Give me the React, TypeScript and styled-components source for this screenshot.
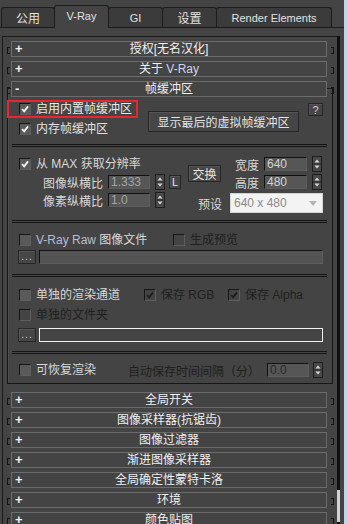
import { createGlobalStyle, styled } from 'styled-components';

const GlobalStyle = createGlobalStyle`
  html, body {
    margin: 0;
    padding: 0;
    background: #444444;
  }
  body {
    font-family: 'Liberation Sans', 'Noto Sans CJK SC', sans-serif;
    font-size: 12px;
    color: #dcdcdc;
  }
  * {
    box-sizing: border-box;
  }
`;

const LIGHT = '#d8d8d8';
const DIM = '#202020';

const Window = styled.div`
  width: 347px;
  height: 524px;
  display: flex;
  overflow: hidden;
  background: #444444;
`;

const Main = styled.div`
  width: 344px;
  display: flex;
  flex-direction: column;
`;

const EdgeStrip = styled.div`
  width: 3px;
  background: #c4d4e6;
`;

// tabs
const TabBar = styled.div`
  height: 28px;
  flex-shrink: 0;
  display: flex;
  align-items: flex-end;
  padding-left: 1px;
  border-bottom: 1px solid #1c1c1c;
`;

const Tab = styled.div<{ $w: number; $active?: boolean; $latin?: boolean }>`
  position: relative;
  width: ${p => p.$w}px;
  height: ${p => (p.$active ? 23 : 20)}px;
  margin-bottom: ${p => (p.$active ? -1 : 0)}px;
  margin-right: -1px;
  background: ${p => (p.$active ? '#444444' : '#3b3b3b')};
  border: 1px solid #1c1c1c;
  border-bottom: none;
  border-radius: 3px 3px 0 0;
  display: flex;
  align-items: center;
  justify-content: center;
  padding-bottom: ${p => (p.$active ? 2 : 0)}px;
  color: #e2e2e2;
  font-size: ${p => (p.$latin ? 11 : 12)}px;
  z-index: ${p => (p.$active ? 1 : 0)};
`;

// panel + scroll bar
const Body = styled.div`
  flex: 1;
  min-height: 0;
  display: flex;
  margin-top: 8px;
`;

const Panel = styled.div`
  width: 335px;
  margin-left: 2px;
  padding-top: 4px;
  border-left: 1px solid #1b1b1b;
  border-top: 1px solid #1b1b1b;
  overflow: hidden;
`;

const Track = styled.div`
  width: 3px;
  background: #0f0f0f;
  display: flex;
  flex-direction: column;
  justify-content: flex-end;
`;

const Thumb = styled.div`
  height: 32px;
  margin-bottom: 2px;
  background: #d2d2d2;
`;

// rollout headers
const RollRow = styled.div<{ $open?: boolean }>`
  position: relative;
  z-index: 1;
  display: flex;
  align-items: flex-end;
  height: 16px;
  margin: ${p => (p.$open ? '0' : '0 0 4px 4px')};
`;

const Bracket = styled.span<{ $side: 'l' | 'r' }>`
  width: 3px;
  height: 7px;
  margin-bottom: 3px;
  border: 1px solid #141414;
  ${p => (p.$side === 'l' ? 'border-right: none; margin-right: 1px;' : 'border-left: none; margin-left: 4px;')}
`;

const HeadBox = styled.div`
  width: 316px;
  height: 16px;
  background: #444444;
  border: 1px solid #6c6c6c;
  display: grid;
  grid-template-columns: 14px 1fr 14px;
  align-items: center;
  line-height: 14px;
  color: #f0f0f0;
`;

const Sign = styled.span`
  padding-left: 3px;
  font-weight: bold;
  font-size: 13px;
`;

const HeadTitle = styled.span`
  text-align: center;
  white-space: nowrap;
`;

const Latin = styled.span<{ $c?: string }>`
  color: ${p => p.$c || 'inherit'};
`;

function Rollout({ title, open }: { title: React.ReactNode; open?: boolean }) {
  return (
    <RollRow $open={open}>
      <Bracket $side='l' />
      <HeadBox>
        <Sign>{open ? '-' : '+'}</Sign>
        <HeadTitle>{title}</HeadTitle>
        <span />
      </HeadBox>
      <Bracket $side='r' />
    </RollRow>
  );
}

// open rollout frame
const OpenRoll = styled.div`
  position: relative;
  width: 327px;
  margin: 0 0 8px 4px;
  padding-bottom: 6px;

  &::before {
    content: '';
    position: absolute;
    top: 7px;
    left: 0;
    right: 1px;
    bottom: 0;
    border: 1px solid #161616;
    box-shadow: inset 1px 1px 0 #4e4e4e;
    pointer-events: none;
  }
`;

const Separator = styled.div`
  width: 315px;
  height: 3px;
  margin-left: 5px;
  border-top: 1px solid #151515;
  border-bottom: 1px solid #151515;
`;

// controls
const CheckItem = styled.label<{ $w?: number; $c?: string }>`
  display: flex;
  align-items: center;
  gap: 5px;
  height: 14px;
  line-height: 14px;
  white-space: nowrap;
  flex-shrink: 0;
  width: ${p => (p.$w ? `${p.$w}px` : 'auto')};
  color: ${p => p.$c || LIGHT};
`;

const Box = styled.span<{ $enabled: boolean }>`
  width: 12px;
  height: 12px;
  flex-shrink: 0;
  border: 1px solid #161616;
  border-right-color: #5e5e5e;
  border-bottom-color: #5e5e5e;
  background: ${p => (p.$enabled ? '#5a5a5a' : '#444444')};
  display: flex;
  align-items: center;
  justify-content: center;
`;

function Check({ on, enabled = true }: { on?: boolean; enabled?: boolean }) {
  return (
    <Box $enabled={enabled}>
      {on && (
        <svg width='8' height='8' viewBox='0 0 8 8'>
          <path d='M1 4 L3.2 6.4 L7 1.4' fill='none' stroke={enabled ? '#f4f4f4' : '#1c1c1c'} strokeWidth='1.8' />
        </svg>
      )}
    </Box>
  );
}

const Button = styled.div<{ $w: number; $h: number }>`
  width: ${p => p.$w}px;
  height: ${p => p.$h}px;
  flex-shrink: 0;
  background: #464646;
  border: 1px solid #262626;
  box-shadow: inset 1px 1px 0 #555555;
  display: flex;
  align-items: center;
  justify-content: center;
  color: #e4e4e4;
  white-space: nowrap;
`;

const NumInput = styled.div<{ $w: number; $c?: string }>`
  width: ${p => p.$w}px;
  height: 14px;
  flex-shrink: 0;
  background: #565656;
  border: 1px solid;
  border-color: #121212 #5e5e5e #5e5e5e #121212;
  padding-left: 2px;
  line-height: 12px;
  color: ${p => p.$c || '#d4d4d4'};
`;

const SpinBox = styled.div`
  width: 10px;
  height: 16px;
  flex-shrink: 0;
  background: #484848;
  border: 1px solid #1e1e1e;
  display: flex;
  align-items: center;
  justify-content: center;
`;

function Spinner() {
  return (
    <SpinBox>
      <svg width='8' height='14' viewBox='0 0 8 14'>
        <polygon points='1.5,5.5 4,2.5 6.5,5.5' fill='#d8d8d8' />
        <line x1='0' y1='7' x2='8' y2='7' stroke='#2a2a2a' />
        <polygon points='1.5,8.5 4,11.5 6.5,8.5' fill='#d8d8d8' />
      </svg>
    </SpinBox>
  );
}

const PathInput = styled.div<{ $outline?: boolean }>`
  flex: 1;
  height: 14px;
  background: ${p => (p.$outline ? '#444444' : '#545454')};
  border: 1px solid;
  border-color: ${p => (p.$outline ? '#f2f2f2' : '#121212 #5e5e5e #5e5e5e #121212')};
`;

// section 1
const TopSection = styled.div`
  position: relative;
  display: flex;
  align-items: flex-start;
  padding: 5px 11px 8px 12px;
`;

const CheckCol = styled.div`
  width: 129px;
  display: flex;
  flex-direction: column;
  gap: 6px;
`;

const Highlight = styled.div`
  position: absolute;
  left: 0;
  top: 3px;
  width: 131px;
  height: 18px;
  border: 2px solid #e8262b;
  pointer-events: none;
`;

const HelpButton = styled(Button)`
  margin-left: auto;
  margin-top: 1px;
  color: #c8d0e6;
  font-size: 11px;
`;

// section 2
const ResGrid = styled.div`
  display: grid;
  grid-template-columns: 169px 47px 29px 48px 1fr;
  grid-template-rows: 16px 16px 21px;
  row-gap: 2px;
  padding: 9px 11px 7px 12px;
  align-items: center;
`;

const AspectRow = styled.div`
  display: flex;
  align-items: center;
  height: 16px;
  align-self: start;
  gap: 5px;
`;

const FieldLabel = styled.span<{ $w?: number; $c?: string }>`
  width: ${p => (p.$w ? `${p.$w}px` : 'auto')};
  flex-shrink: 0;
  text-align: right;
  white-space: nowrap;
  color: ${p => p.$c || LIGHT};
`;

const SwapButton = styled(Button)`
  grid-column: 2;
  grid-row: 1 / 3;
  align-self: center;
`;

const PresetRow = styled.div`
  grid-column: 2 / 6;
  display: flex;
  justify-content: flex-end;
  align-items: center;
  gap: 8px;
  align-self: end;
`;

const Dropdown = styled.div`
  width: 93px;
  height: 20px;
  background: #f3f3f3;
  border: 1px solid #d4d4d4;
  display: flex;
  align-items: center;
  justify-content: space-between;
  padding: 0 5px 0 3px;
  color: #8a8a8a;
`;

// sections 3..5
const Section = styled.div<{ $top: number; $bottom: number }>`
  display: flex;
  flex-direction: column;
  padding: ${p => p.$top}px 11px ${p => p.$bottom}px 12px;
`;

const Row = styled.div<{ $gap?: number; $h?: number }>`
  display: flex;
  align-items: center;
  height: ${p => p.$h || 14}px;
  margin-top: ${p => p.$gap || 0}px;
`;

const PathRow = styled.div<{ $gap: number }>`
  display: flex;
  gap: 3px;
  height: 14px;
  margin: ${p => p.$gap}px 0 0 -1px;
`;

const Dots = styled(Button)`
  align-items: flex-end;
  padding-bottom: 1px;
  font-size: 10px;
  letter-spacing: 1px;
  color: #cfcfcf;
`;

const closed = [
  '全局开关',
  '图像采样器(抗锯齿)',
  '图像过滤器',
  '渐进图像采样器',
  '全局确定性蒙特卡洛',
  '环境',
  '颜色贴图',
];

export default function App() {
  return (
    <Window>
      <GlobalStyle />
      <Main>
        <TabBar>
          <Tab $w={54}>公用</Tab>
          <Tab $w={55} $active $latin>V-Ray</Tab>
          <Tab $w={55} $latin>GI</Tab>
          <Tab $w={55}>设置</Tab>
          <Tab $w={116} $latin>Render Elements</Tab>
        </TabBar>
        <Body>
          <Panel>
            <Rollout title='授权[无名汉化]' />
            <Rollout
              title={
                <>
                  关于 <Latin $c='#cdd6ee'>V-Ray</Latin>
                </>
              }
            />
            <OpenRoll>
              <Rollout title='帧缓冲区' open />

              <TopSection>
                <Highlight />
                <CheckCol>
                  <CheckItem $c='#e8e8e8'>
                    <Check on />
                    启用内置帧缓冲区
                  </CheckItem>
                  <CheckItem $c='#e0e0e0'>
                    <Check on />
                    内存帧缓冲区
                  </CheckItem>
                </CheckCol>
                <Button $w={151} $h={21} style={{ marginTop: 9 }}>
                  显示最后的虚拟帧缓冲区
                </Button>
                <HelpButton $w={15} $h={13}>?</HelpButton>
              </TopSection>
              <Separator />

              <ResGrid>
                <CheckItem>
                  <Check on />
                  从 MAX 获取分辨率
                </CheckItem>
                <SwapButton $w={33} $h={17}>交换</SwapButton>
                <FieldLabel style={{ textAlign: 'left' }}>宽度</FieldLabel>
                <NumInput $w={43}>640</NumInput>
                <Spinner />

                <AspectRow>
                  <FieldLabel $w={84}>图像纵横比</FieldLabel>
                  <NumInput $w={42} $c='#a4a4a4'>1.333</NumInput>
                  <Spinner />
                  <Button $w={12} $h={14} style={{ marginLeft: -1, fontSize: 11 }}>L</Button>
                </AspectRow>
                <FieldLabel style={{ textAlign: 'left', gridColumn: 3 }}>高度</FieldLabel>
                <NumInput $w={43}>480</NumInput>
                <Spinner />

                <AspectRow>
                  <FieldLabel $w={84}>像素纵横比</FieldLabel>
                  <NumInput $w={42} $c='#a4a4a4'>1.0</NumInput>
                  <Spinner />
                </AspectRow>
                <PresetRow>
                  <FieldLabel>预设</FieldLabel>
                  <Dropdown>
                    640 x 480
                    <svg width='8' height='5' viewBox='0 0 8 5'>
                      <polygon points='0,0 8,0 4,5' fill='#b4b4b4' />
                    </svg>
                  </Dropdown>
                </PresetRow>
              </ResGrid>
              <Separator />

              <Section $top={10} $bottom={10}>
                <Row>
                  <CheckItem $w={154}>
                    <Check />
                    <span>
                      <Latin $c='#b6bfd2'>V-Ray Raw </Latin>图像文件
                    </span>
                  </CheckItem>
                  <CheckItem $c={DIM}>
                    <Check enabled={false} />
                    生成预览
                  </CheckItem>
                </Row>
                <PathRow $gap={3}>
                  <Dots $w={18} $h={14}>...</Dots>
                  <PathInput />
                </PathRow>
              </Section>
              <Separator />

              <Section $top={11} $bottom={9}>
                <Row>
                  <CheckItem $w={125}>
                    <Check />
                    单独的渲染通道
                  </CheckItem>
                  <CheckItem $w={84} $c={DIM}>
                    <Check on enabled={false} />
                    保存 RGB
                  </CheckItem>
                  <CheckItem $c={DIM}>
                    <Check on enabled={false} />
                    保存 Alpha
                  </CheckItem>
                </Row>
                <Row $gap={6}>
                  <CheckItem $c={DIM}>
                    <Check enabled={false} />
                    单独的文件夹
                  </CheckItem>
                </Row>
                <PathRow $gap={6}>
                  <Dots $w={18} $h={14}>...</Dots>
                  <PathInput $outline />
                </PathRow>
              </Section>
              <Separator />

              <Section $top={8} $bottom={0}>
                <Row $h={16}>
                  <CheckItem $w={109}>
                    <Check />
                    可恢复渲染
                  </CheckItem>
                  <FieldLabel $w={139} $c={DIM} style={{ textAlign: 'left' }}>
                    自动保存时间间隔（分）
                  </FieldLabel>
                  <NumInput $w={42} $c='#2a2a2a'>0.0</NumInput>
                  <span style={{ width: 4 }} />
                  <Spinner />
                </Row>
              </Section>
            </OpenRoll>

            {closed.map(t => (
              <Rollout key={t} title={t} />
            ))}
          </Panel>
          <Track>
            <Thumb />
          </Track>
        </Body>
      </Main>
      <EdgeStrip />
    </Window>
  );
}
